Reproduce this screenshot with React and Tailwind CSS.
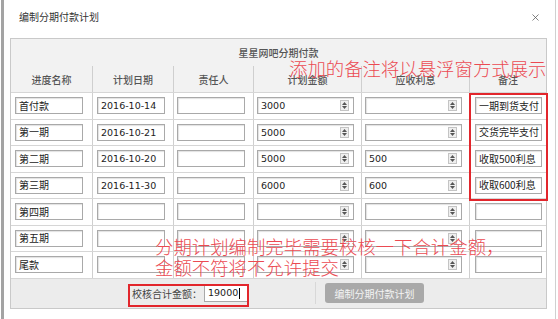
import { X } from 'lucide-react'

const cjk = { fontFamily: '"Noto Sans CJK SC", "Noto Sans", sans-serif' }
const num = { fontFamily: '"DejaVu Sans", "Noto Sans CJK SC", sans-serif' }

const rows = [
  { name: '首付款', date: '2016-10-14', amount: '3000', interest: '', note: '一期到货支付' },
  { name: '第一期', date: '2016-10-21', amount: '5000', interest: '', note: '交货完毕支付' },
  { name: '第二期', date: '2016-10-20', amount: '5000', interest: '500', note: '收取500利息' },
  { name: '第三期', date: '2016-11-30', amount: '6000', interest: '600', note: '收取600利息' },
  { name: '第四期', date: '', amount: '', interest: '', note: '' },
  { name: '第五期', date: '', amount: '', interest: '', note: '' },
  { name: '尾款', date: '', amount: '', interest: '', note: '' },
]

const headers = ['进度名称', '计划日期', '责任人', '计划金额', '应收利息', '备注']

const cols = 'grid grid-cols-[81px_81px_80px_108px_108px_77px]'

function Field({ value, w, spin }) {
  return (
    <div
      className={`relative h-[17px] ${w} border border-[#a9a9a9] bg-white shadow-[inset_1px_1px_1px_rgba(0,0,0,0.12)] flex items-center pl-[3px] text-[9.5px] text-[#222]`}
      style={num}
    >
      <span className="leading-none">{value}</span>
      {spin && (
        <div className="absolute right-[4px] top-[2px] w-[9px] h-[11px] border border-[#c4c4c4] bg-[#efefef] flex flex-col items-center justify-center gap-[1px]">
          <svg width="5" height="3" viewBox="0 0 5 3"><path d="M0 3 L2.5 0 L5 3 Z" fill="#555" /></svg>
          <svg width="5" height="3" viewBox="0 0 5 3"><path d="M0 0 L2.5 3 L5 0 Z" fill="#555" /></svg>
        </div>
      )}
    </div>
  )
}

function TextField({ value, w }) {
  return (
    <div
      className={`h-[17px] ${w} border border-[#a9a9a9] bg-white shadow-[inset_1px_1px_1px_rgba(0,0,0,0.12)] flex items-center pl-[3px] text-[10px] text-[#222] whitespace-nowrap overflow-hidden`}
      style={cjk}
    >
      <span className="leading-none">{value}</span>
    </div>
  )
}

export default function App() {
  return (
    <div className="relative w-[558px] h-[319px] bg-white overflow-hidden flex" style={cjk}>
      <div className="w-[1px] bg-white" />
      <div className="flex-1 flex flex-col border-l-[3px] border-[#a3a3a3] border-r border-r-[#d0d0d0] mr-[2px]">
        {/* Title bar */}
        <div className="h-[38px] flex items-start justify-between pl-[15px] pr-[14px] pt-[10px]">
          <span className="text-[10px] text-[#333] leading-[14px]">编制分期付款计划</span>
          <X className="w-[11px] h-[11px] text-[#555] mt-[2px]" strokeWidth={1.6} />
        </div>

        {/* Panel */}
        <div className="ml-[6px] w-[537px] border border-[#c9c9c9] flex flex-col">
          <div className="h-[27px] bg-[#f2f2f2] flex items-center justify-center text-[10px] text-[#555] font-medium">
            星星网吧分期付款
          </div>
          <div className={`${cols} h-[26px] bg-[#f2f2f2]`}>
            {headers.map((h, i) => (
              <div
                key={h}
                className={`flex items-center justify-center text-[10px] text-[#555] font-medium ${i > 0 ? 'border-l border-[#cfcfcf]' : ''}`}
              >
                {h}
              </div>
            ))}
          </div>
          {rows.map((r) => (
            <div key={r.name} className={`${cols} h-[26.5px] border-t border-[#d6d6d6]`}>
              <div className="flex items-center pl-[4px]"><TextField value={r.name} w="w-[68px]" /></div>
              <div className="flex items-center pl-[4px] border-l border-[#cfcfcf]"><Field value={r.date} w="w-[68px]" /></div>
              <div className="flex items-center pl-[3px] border-l border-[#cfcfcf]"><Field value="" w="w-[68px]" /></div>
              <div className="flex items-center pl-[3px] border-l border-[#cfcfcf]"><Field value={r.amount} w="w-[97px]" spin /></div>
              <div className="flex items-center pl-[3px] border-l border-[#cfcfcf]"><Field value={r.interest} w="w-[97px]" spin /></div>
              <div className="flex items-center pl-[5px] border-l border-[#cfcfcf]"><TextField value={r.note} w="w-[67px]" /></div>
            </div>
          ))}
          <div className="h-[30px] bg-[#ececec] border-t border-[#d6d6d6] flex items-center pl-[121px]">
            <span className="text-[10px] text-[#444] mr-[2px]">校核合计金额：</span>
            <div
              className="h-[17px] w-[45px] border border-[#a9a9a9] bg-white flex items-center pl-[3px] text-[9.5px] text-[#222]"
              style={num}
            >
              <span className="leading-none">19000</span>
              <span className="w-px h-[11px] bg-black ml-[1px]" />
            </div>
            <div className="w-px h-[22px] bg-[#d8d8d8] ml-[66px]" />
            <div className="ml-[9px] h-[20px] w-[99px] rounded-[3px] bg-[#a9a9a9] flex items-center justify-center text-[10px] text-[#f4f4f4]">
              编制分期付款计划
            </div>
          </div>
        </div>
      </div>

      {/* Annotations */}
      <div className="absolute left-[469px] top-[93px] w-[79px] h-[108px] border-2 border-[#e2262c]" />
      <div className="absolute left-[128px] top-[284px] w-[121px] h-[23px] border-2 border-[#e2262c]" />
      <div className="absolute left-[289px] top-[57px] text-[18.4px] leading-[22px] font-light text-[#eb4a52] whitespace-nowrap">
        添加的备注将以悬浮窗方式展示
      </div>
      <div className="absolute left-[155px] top-[236px] text-[18.4px] leading-[21px] font-light text-[#eb4a52] whitespace-nowrap">
        <div>分期计划编制完毕需要校核一下合计金额，</div>
        <div>金额不符将不允许提交</div>
      </div>
    </div>
  )
}
